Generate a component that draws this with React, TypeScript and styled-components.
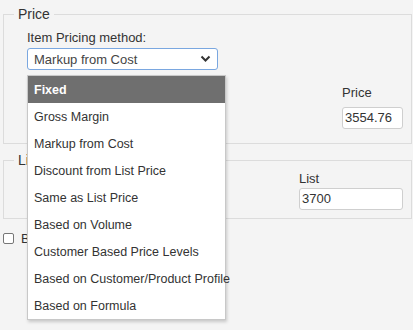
import { createGlobalStyle } from "styled-components";
import styled from "styled-components";

const GlobalStyle = createGlobalStyle`
  html, body {
    margin: 0;
    padding: 0;
    background: #f4f4f4;
  }
  body {
    font-family: "Liberation Sans", Arial, sans-serif;
    font-size: 13px;
    color: #333;
  }
  * {
    box-sizing: border-box;
  }
`;

const Page = styled.div`
  position: relative;
  width: 413px;
  height: 330px;
  padding: 6px 1px 0 3px;
  overflow: hidden;
`;

const Fieldset = styled.fieldset<{ $height: number; $gap?: number }>`
  margin: ${(p) => p.$gap ?? 0}px 0 0 0;
  padding: 0 8px 0 23px;
  border: 1px solid #dcdcdc;
  height: ${(p) => p.$height}px;
`;

const Legend = styled.legend`
  padding: 0 4px;
  margin-left: -13px;
  font-size: 14px;
  color: #333;
`;

const FieldLabel = styled.div`
  font-size: 13px;
  color: #333;
  line-height: 15px;
`;

const MethodBlock = styled.div`
  margin-top: 8px;
  width: 191px;
`;

const SelectBox = styled.div`
  margin-top: 3px;
  height: 22px;
  border: 1px solid #7aa7e0;
  border-radius: 3px;
  background: #fff;
  display: flex;
  align-items: center;
  justify-content: space-between;
  padding: 0 6px 0 6px;
  font-size: 13px;
  color: #444;
`;

const RightRow = styled.div<{ $top: number }>`
  display: flex;
  justify-content: flex-end;
  margin-top: ${(p) => p.$top}px;
`;

const Field = styled.div<{ $width: number }>`
  width: ${(p) => p.$width}px;
`;

const TextInput = styled.div<{ $gap: number }>`
  margin-top: ${(p) => p.$gap}px;
  height: 22px;
  border: 1px solid #cfcfcf;
  border-radius: 3px;
  background: #fff;
  padding: 0 2px;
  line-height: 20px;
  font-size: 13px;
  color: #333;
`;

const CheckRow = styled.label`
  display: flex;
  align-items: center;
  gap: 7px;
  margin-top: 12px;
  font-size: 13px;
`;

const Box = styled.span`
  width: 11px;
  height: 11px;
  border: 1px solid #767676;
  border-radius: 2px;
  background: #fff;
`;

const Menu = styled.ul`
  position: absolute;
  left: 27px;
  top: 75px;
  width: 199px;
  margin: 0;
  padding: 0;
  list-style: none;
  background: #fff;
  border: 1px solid #c8c8c8;
  box-shadow: 1px 2px 3px rgba(0, 0, 0, 0.18);
`;

const MenuItem = styled.li<{ $active?: boolean }>`
  height: 27px;
  padding-left: 6px;
  display: flex;
  align-items: center;
  white-space: nowrap;
  font-size: 12.5px;
  font-weight: ${(p) => (p.$active ? 700 : 400)};
  color: ${(p) => (p.$active ? "#fff" : "#333")};
  background: ${(p) => (p.$active ? "#6f6f6f" : "#fff")};
`;

const options = [
  "Fixed",
  "Gross Margin",
  "Markup from Cost",
  "Discount from List Price",
  "Same as List Price",
  "Based on Volume",
  "Customer Based Price Levels",
  "Based on Customer/Product Profile",
  "Based on Formula",
];

const Chevron = () => (
  <svg width="11" height="8" viewBox="0 0 11 8">
    <path d="M1.5 1.5 L5.5 5.5 L9.5 1.5" fill="none" stroke="#333" strokeWidth="2" />
  </svg>
);

export default function App() {
  return (
    <>
      <GlobalStyle />
      <Page>
        <Fieldset $height={138}>
          <Legend>Price</Legend>
          <MethodBlock>
            <FieldLabel>Item Pricing method:</FieldLabel>
            <SelectBox>
              <span>Markup from Cost</span>
              <Chevron />
            </SelectBox>
          </MethodBlock>
          <RightRow $top={15}>
            <Field $width={61}>
              <FieldLabel>Price</FieldLabel>
              <TextInput $gap={7}>3554.76</TextInput>
            </Field>
          </RightRow>
        </Fieldset>
        <Fieldset $height={67} $gap={8}>
          <Legend>List Price</Legend>
          <RightRow $top={3}>
            <Field $width={104}>
              <FieldLabel>List</FieldLabel>
              <TextInput $gap={2}>3700</TextInput>
            </Field>
          </RightRow>
        </Fieldset>
        <CheckRow>
          <Box />
          <span>Based on List Price</span>
        </CheckRow>
        <Menu>
          {options.map((o) => (
            <MenuItem key={o} $active={o === "Fixed"}>
              {o}
            </MenuItem>
          ))}
        </Menu>
      </Page>
    </>
  );
}
